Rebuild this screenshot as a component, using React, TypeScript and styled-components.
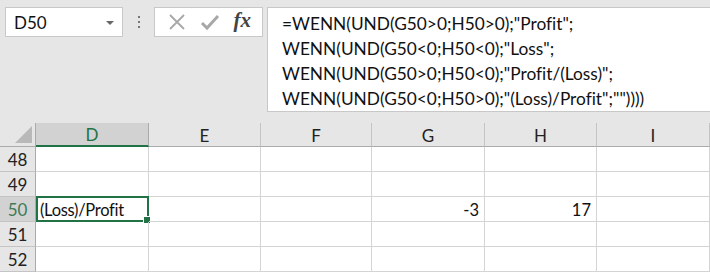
import styled, { createGlobalStyle } from 'styled-components'

const GlobalStyle = createGlobalStyle`
  html, body {
    margin: 0;
    padding: 0;
    background: #ffffff;
  }
  * {
    box-sizing: border-box;
  }
`

const green = '#217346'
const font = `Lato, 'Open Sans', 'Liberation Sans', sans-serif`

const Window = styled.div`
  width: 710px;
  height: 275px;
  overflow: hidden;
  font-family: ${font};
  font-variant-ligatures: none;
  background: #ffffff;
`

const TopBar = styled.div`
  height: 123px;
  background: #e6e6e6;
  display: flex;
  align-items: flex-start;
  padding: 7px 0 0 5px;
`

const NameBox = styled.div`
  width: 118px;
  height: 30px;
  background: #ffffff;
  border: 1px solid #c8c8c8;
  display: flex;
  align-items: center;
  justify-content: space-between;
  padding: 0 8px 0 8px;
  font-size: 17px;
  color: #111;
`

const DropArrow = styled.span`
  width: 0;
  height: 0;
  border-left: 4px solid transparent;
  border-right: 4px solid transparent;
  border-top: 4px solid #666;
  margin-top: 1px;
`

const Grip = styled.div`
  width: 31px;
  height: 30px;
  display: flex;
  flex-direction: column;
  align-items: center;
  justify-content: center;
  gap: 3px;

  span {
    width: 2px;
    height: 2px;
    background: #777;
  }
`

const FxButtons = styled.div`
  width: 109px;
  height: 30px;
  background: #ffffff;
  border: 1px solid #c8c8c8;
  display: flex;
  align-items: center;
  justify-content: space-around;
  padding: 0 4px 0 6px;
`

const FxLabel = styled.span`
  font-family: 'Liberation Serif', 'DejaVu Serif', serif;
  font-style: italic;
  font-weight: bold;
  font-size: 21px;
  color: #444;
  margin-top: -3px;
`

const FormulaBar = styled.div`
  margin-left: 4px;
  flex: 1;
  height: 105px;
  background: #ffffff;
  border: 1px solid #c8c8c8;
  border-right: none;
  padding: 3px 0 0 14px;
  font-size: 17.3px;
  line-height: 25px;
  color: #111;
  white-space: pre;
`

const Sheet = styled.div`
  display: grid;
  grid-template-columns: 36px 113px 112px 111px 113px 112px 1fr;
  grid-auto-rows: 25px;
  grid-template-rows: 24px;
  font-size: 16px;
`

const Corner = styled.div`
  background: #e6e6e6;
  border-right: 1px solid #ababab;
  border-bottom: 1px solid #ababab;
  display: flex;
  align-items: flex-end;
  justify-content: flex-end;
  padding: 0 3px 3px 0;
`

const ColHead = styled.div<{ $active?: boolean }>`
  background: ${(p) => (p.$active ? '#d2d2d2' : '#e6e6e6')};
  color: ${(p) => (p.$active ? green : '#222')};
  border-right: 1px solid ${(p) => (p.$active ? '#ababab' : '#c4c4c4')};
  border-bottom: ${(p) => (p.$active ? `2px solid ${green}` : '1px solid #ababab')};
  display: flex;
  align-items: center;
  justify-content: center;
  padding-top: 1px;
  font-size: 17px;
`

const RowHead = styled.div<{ $active?: boolean }>`
  background: ${(p) => (p.$active ? '#d2d2d2' : '#e6e6e6')};
  color: ${(p) => (p.$active ? '#3f7a57' : '#222')};
  border-right: 1px solid #ababab;
  border-bottom: 1px solid #c4c4c4;
  display: flex;
  align-items: center;
  justify-content: center;
  padding-top: 1px;
  font-size: 17px;
`

const Cell = styled.div<{ $align?: 'left' | 'right'; $selected?: boolean }>`
  position: relative;
  border-right: 1px solid #d4d4d4;
  border-bottom: 1px solid #d4d4d4;
  display: flex;
  align-items: center;
  justify-content: ${(p) => (p.$align === 'right' ? 'flex-end' : 'flex-start')};
  padding: 1px 5px 0 4px;
  color: #111;
  white-space: nowrap;
  font-size: 16.5px;
  letter-spacing: ${(p) => (p.$align === 'left' ? '-0.3px' : '0')};

  ${(p) =>
    p.$selected &&
    `
    &::before {
      content: '';
      position: absolute;
      left: 0;
      top: -1px;
      right: -1px;
      bottom: -1px;
      border: 2px solid ${green};
    }
    &::after {
      content: '';
      position: absolute;
      right: -3px;
      bottom: -3px;
      width: 6px;
      height: 6px;
      background: ${green};
      border: 1px solid #fff;
    }
  `}
`

const columns = ['D', 'E', 'F', 'G', 'H', 'I']

const rows: { n: number; values: Record<string, string> }[] = [
  { n: 48, values: {} },
  { n: 49, values: {} },
  { n: 50, values: { D: '(Loss)/Profit', G: '-3', H: '17' } },
  { n: 51, values: {} },
  { n: 52, values: {} },
]

const formula = [
  '=WENN(UND(G50>0;H50>0);"Profit";',
  'WENN(UND(G50<0;H50<0);"Loss";',
  'WENN(UND(G50>0;H50<0);"Profit/(Loss)";',
  'WENN(UND(G50<0;H50>0);"(Loss)/Profit";""))))',
]

const App = () => {
  return (
    <Window>
      <GlobalStyle />
      <TopBar>
        <NameBox>
          <span>D50</span>
          <DropArrow />
        </NameBox>
        <Grip>
          <span />
          <span />
          <span />
        </Grip>
        <FxButtons>
          <svg width="18" height="18" viewBox="0 0 18 18">
            <path d="M2 2 L16 16 M16 2 L2 16" stroke="#a8a8a8" strokeWidth="1.8" fill="none" />
          </svg>
          <svg width="20" height="18" viewBox="0 0 20 18">
            <path d="M2 10 L7 15 L18 3" stroke="#a8a8a8" strokeWidth="3" fill="none" />
          </svg>
          <FxLabel>fx</FxLabel>
        </FxButtons>
        <FormulaBar>{formula.join('\n')}</FormulaBar>
      </TopBar>
      <Sheet>
        <Corner>
          <svg width="17" height="17" viewBox="0 0 17 17">
            <polygon points="17,0 17,17 0,17" fill="#b9b9b9" />
          </svg>
        </Corner>
        {columns.map((c) => (
          <ColHead key={c} $active={c === 'D'}>
            {c}
          </ColHead>
        ))}
        {rows.map((r) => [
          <RowHead key={`h-${r.n}`} $active={r.n === 50}>
            {r.n}
          </RowHead>,
          ...columns.map((c) => {
            const v = r.values[c]
            const numeric = v !== undefined && !isNaN(Number(v))
            return (
              <Cell
                key={`${c}${r.n}`}
                $align={numeric ? 'right' : 'left'}
                $selected={c === 'D' && r.n === 50}
              >
                {v}
              </Cell>
            )
          }),
        ])}
      </Sheet>
    </Window>
  )
}

export default App
